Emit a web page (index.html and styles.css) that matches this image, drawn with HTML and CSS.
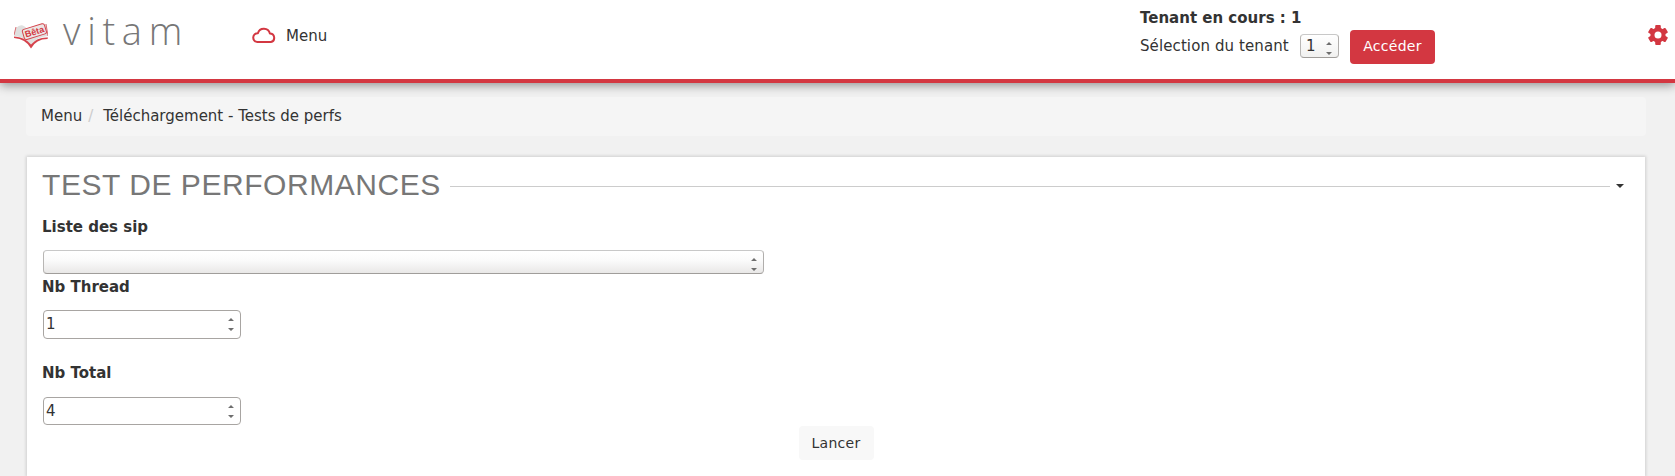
FILE: index.html
```html
<!DOCTYPE html>
<html lang="fr">
<head>
<meta charset="utf-8">
<title>Vitam - Tests de perfs</title>
<link rel="stylesheet" href="styles.css">
</head>
<body>
<header class="topbar">
  <a class="brand">
    <svg class="brand-logo" width="34" height="26" viewBox="0 0 34 26">
      <path d="M0 13 2 5Q8-1 13 6L32 1 34 13Q22 14 17 22 12 14 0 13Z" fill="#e0e0df"/>
      <path d="M0 12 2 4M32 1l2 12" fill="none" stroke="#d96a70" stroke-width="1"/>
      <path d="M0 13.500Q11 14 17 21.500 23 14 34 14.500L33.500 16Q22 16 17 25.500 12 16 0 15Z" fill="#d5434c"/>
      <g transform="rotate(-17 20 9)">
        <rect x="9" y="3.500" width="23" height="10.500" rx="2" fill="#ece6e5" stroke="#d5434c" stroke-width="1"/>
        <text class="beta" x="20.500" y="12" text-anchor="middle">Bêta</text>
      </g>
    </svg>
    <span class="brand-name">vitam</span>
  </a>
  <nav class="main-nav">
    <svg width="24" height="16" viewBox="0 0 24 16"><path d="M5.400 15A4.400 4.400 0 0 1 5.900 6.200 6.200 6.200 0 0 1 17.900 6.500 4.300 4.300 0 0 1 18.800 15Z" fill="none" stroke="#d33741" stroke-width="2" stroke-linejoin="round"/></svg>
    <span>Menu</span>
  </nav>
  <div class="tenant">
    <strong class="tenant-current">Tenant en cours : 1</strong>
    <div class="tenant-row">
      <span class="tenant-label">Sélection du tenant</span>
      <span class="select select-small"><span>1</span><svg class="arrows" width="6" height="13" viewBox="0 0 6 13"><path d="M3 0 6 3H0ZM0 10H6L3 13Z"/></svg></span>
      <button class="btn btn-primary">Accéder</button>
    </div>
  </div>
  <svg class="gear" width="20" height="20" viewBox="0 0 20 20">
    <g fill="#d33741">
      <rect x="7.200" y="0" width="5.600" height="20" rx="1"/>
      <rect x="7.200" y="0" width="5.600" height="20" rx="1" transform="rotate(60 10 10)"/>
      <rect x="7.200" y="0" width="5.600" height="20" rx="1" transform="rotate(120 10 10)"/>
      <circle cx="10" cy="10" r="7.600"/>
    </g>
    <circle cx="10" cy="10" r="3.500" fill="#fff"/>
  </svg>
</header>
<main class="content">
  <div class="breadcrumb"><span>Menu</span><span class="sep">/</span><span>Téléchargement - Tests de perfs</span></div>
  <section class="panel">
    <div class="panel-head">
      <h1 class="panel-title">TEST DE PERFORMANCES</h1>
      <span class="rule"></span>
      <svg class="caret" width="8" height="4" viewBox="0 0 8 4"><path d="M0 0H8L4 4Z" fill="#333"/></svg>
    </div>
    <label class="label">Liste des sip</label>
    <div class="select select-wide"><svg class="arrows" width="6" height="13" viewBox="0 0 6 13"><path d="M3 0 6 3H0ZM0 10H6L3 13Z"/></svg></div>
    <label class="label">Nb Thread</label>
    <div class="number number-thread"><span>1</span><svg class="arrows" width="6" height="13" viewBox="0 0 6 13"><path d="M3 0 6 3H0ZM0 10H6L3 13Z"/></svg></div>
    <label class="label">Nb Total</label>
    <div class="number number-total"><span>4</span><svg class="arrows" width="6" height="13" viewBox="0 0 6 13"><path d="M3 0 6 3H0ZM0 10H6L3 13Z"/></svg></div>
    <div class="actions"><button class="btn btn-default">Lancer</button></div>
  </section>
</main>
</body>
</html>
```
FILE: styles.css
```css
* { box-sizing: border-box; }
html { height: 100%; overflow: hidden; }
body {
  margin: 0;
  height: 100%;
  display: flex;
  flex-direction: column;
  overflow: hidden;
  background: #f1f1f1;
  color: #333;
  font: 15px/20px "DejaVu Sans", sans-serif;
}
svg { display: block; flex: none; }
.topbar {
  flex: none;
  height: 83px;
  display: flex;
  align-items: flex-start;
  background: #fff;
  border-bottom: 4px solid #d33741;
  box-shadow: 0 2px 10px rgba(0, 0, 0, .42);
}
.brand { display: flex; width: 252px; padding-left: 14px; }
.brand-logo { margin-top: 23px; }
.beta { font: bold 9px "Liberation Sans", sans-serif; fill: #d33741; }
.brand-name {
  margin: 4px 0 0 15px;
  font: 300 38px/52px "Open Sans", sans-serif;
  letter-spacing: 6.7px;
  color: #777;
}
.main-nav { display: flex; width: 888px; padding-top: 26px; gap: 10px; }
.main-nav svg { margin-top: 1px; }
.tenant { display: flex; flex-direction: column; padding-top: 8px; }
.tenant-current { height: 22px; }
.tenant-row { display: flex; align-items: flex-start; }
.tenant-label { margin: 6px 0 0; width: 160px; letter-spacing: .1px; }
.btn {
  height: 34px;
  padding: 0 12px;
  border: 0;
  border-radius: 4px;
  font: 14px/20px "DejaVu Sans", sans-serif;
  letter-spacing: .3px;
}
.btn-primary { width: 85px; padding-bottom: 2px; background: #d33741; color: #fff; }
.btn-default { width: 75px; background: #f8f8f8; color: #333; }
.select, .number {
  display: flex;
  align-items: center;
  justify-content: space-between;
  border: 1px solid #a8a5a2;
  border-radius: 4px;
}
.select {
  height: 24px;
  border-color: #c8c8c8 #b0aeac #a09d9a #b8b6b4;
  background: linear-gradient(#fff 0%, #fafafa 45%, #e9e8e7 100%);
}
.select-small { width: 39px; margin: 4px 11px 0 0; padding: 0 6px 0 5px; background: linear-gradient(#fff, #f1f1f0); }
.select-wide { width: 721px; margin: 13px 0 3px 1px; padding: 0 6px; justify-content: flex-end; }
.select .arrows { margin-top: 4px; }
.arrows { fill: #6e6e6e; }
.number { width: 198px; margin-left: 1px; padding: 0 6px 0 2px; background: #fff; }
.number-thread > span { margin-top: -2px; }
.number-thread { height: 29px; margin-top: 13px; margin-bottom: 24px; }
.number-total { height: 28px; margin-top: 14px; }
.gear { margin: 25px 7px 0 auto; }
.content { flex: 1; display: flex; flex-direction: column; padding: 14px 29px 0 26px; }
.breadcrumb {
  display: flex;
  height: 39px;
  padding: 9px 15px;
  border-radius: 4px;
  background: #f5f5f5;
}
.sep { width: 21px; padding-left: 6px; color: #ccc; }
.panel {
  flex: 1;
  margin: 21px 1px 0;
  padding: 12px 15px 0;
  background: #fff;
  box-shadow: 0 0 3px 1px rgba(0, 0, 0, .14);
}
.panel-head { display: flex; align-items: center; height: 33px; margin-bottom: 15px; }
.panel-title {
  margin: -2px 0 0;
  width: 408px;
  font: 400 30px/33px "Liberation Sans", sans-serif;
  letter-spacing: .55px;
  white-space: nowrap;
  color: #777;
}
.rule { flex: 1; height: 1px; margin-top: 1px; background: #ccc; }
.caret { margin: 0 6px 0 6px; }
.label { display: block; height: 20px; font-weight: bold; }
.actions { display: flex; justify-content: center; margin-top: 1px; }
```
